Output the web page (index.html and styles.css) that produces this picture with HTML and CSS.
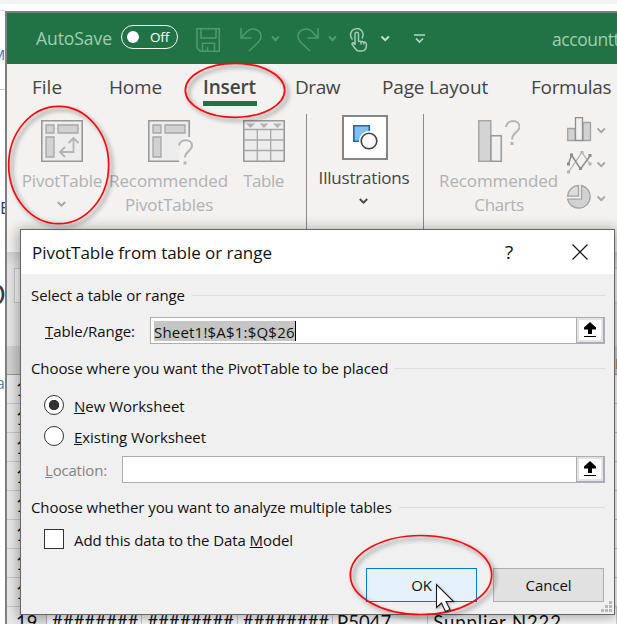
FILE: index.html
```
<!DOCTYPE html>
<html lang="en">
<head>
<meta charset="utf-8">
<title>PivotTable from table or range</title>
<link rel="stylesheet" href="styles.css">
</head>
<body>
<aside class="page-edge">
  <span class="bit bit-m">M</span>
  <span class="bit-line"></span>
  <span class="bit bit-e">E</span>
  <span class="bit bit-o">O</span>
  <span class="bit bit-a">a</span>
</aside>
<main class="excel">
  <header class="titlebar">
    <span class="autosave">AutoSave</span>
    <span class="toggle"><i class="knob"></i><span>Off</span></span>
    <svg class="qat" width="240" height="51" viewBox="189 13 240 51" fill="none" stroke-width="1.5">
      <g stroke="#4f9a6e">
        <path d="M197 28.7h22.3v22.6h-19l-3.3-3.3zM201 28.7v9.3h15v-9.3M202.5 51.3v-8h12v8M207.5 51v-4"/>
        <path d="M241 28v10h10.500M241.500 37.500l5.500-6c5-5 14-2 14 5 0 3-2 5-4 7l-8 7.500"/>
        <path d="M318 28v10h-10.500M317.500 37.500l-5.500-6c-5-5-14-2-14 5 0 3 2 5 4 7l8 7.500"/>
        <path d="M272 36.500l3.500 3.500 3.500-3.500M329 36.500l3.500 3.500 3.500-3.500" stroke-width="2"/>
      </g>
      <g stroke="#a0cdb1">
        <path d="M352.500 39.500a6.300 6.300 0 1 1 9.500-1"/>
        <path d="M355 45V34c0-2.500 3.500-2.500 3.500 0v7l6 1c1.500.300 2 1 2 2.500 0 4-2 6.500-5 6.500h-3c-2 0-3-2-4.500-4l-2-3c0-2 2-1.500 3 .500M361 41.500v3M363.800 42v2.500"/>
        <path d="M381.500 36.500l3.700 3.700 3.700-3.700" stroke="#c5e0cf" stroke-width="2"/>
        <path d="M414 35h11M416 38.500l3.500 3.500 3.500-3.500" stroke="#b5d8c2" stroke-width="1.700"/>
      </g>
    </svg>
    <span class="doc">accountt</span>
  </header>
  <nav class="tabs">
    <span class="tab t-file">File</span><span class="tab t-home">Home</span><span class="tab t-insert">Insert</span><span class="tab t-draw">Draw</span><span class="tab t-page">Page Layout</span><span class="tab t-form">Formulas</span>
  </nav>
  <section class="ribbon">
    <div class="cmd">
      <svg width="42" height="42" viewBox="0 0 42 42" fill="#d2d2d2" stroke="#a6a6a6" stroke-width="1.300">
        <path d="M.8.800h40.400v40.400H.8z" fill="#ededed" stroke="#999" stroke-width="1.600"/>
        <path d="M5 5h8v8H5zM17 5h20v8H17zM5 17h8v20H5z"/>
        <path d="M32.500 18v14H19M27.500 23l5-5 5 5M24 27l-5 5 5 5" fill="none" stroke="#b4b4b4" stroke-width="1.800"/>
      </svg>
      <span class="lbl l-pivot">PivotTable</span>
      <svg class="chev" width="9" height="6" viewBox="0 0 9 6"><path d="M.8 1l3.700 3.700L8.200 1"/></svg>
    </div>
    <div class="cmd">
      <svg class="wide" width="46" height="45" viewBox="0 0 46 45" fill="#d2d2d2" stroke="#a6a6a6" stroke-width="1.300">
        <path d="M41.200 17V.8H.8v40.400H31V31l4-12z" fill="#ededed" stroke="none"/>
        <path d="M41.200 17V.8H.8v40.400H31" fill="none" stroke="#999" stroke-width="1.600"/>
        <path d="M5 5h8v8H5zM17 5h20v8H17zM5 17h8v20H5z"/>
        <path d="M31 25.500c1-7 13-7 13 0 0 5-7 6-7 12" fill="none" stroke="#b4b4b4" stroke-width="2"/>
        <path d="M35.500 41.500h3v3h-3z" fill="#b4b4b4" stroke="none"/>
      </svg>
      <span class="lbl l-rec">Recommended</span>
      <span class="lbl l-pts">PivotTables</span>
    </div>
    <div class="cmd">
      <svg width="42" height="42" viewBox="0 0 42 42" fill="none" stroke="#a8a8a8" stroke-width="1.300">
        <path d="M.8.800h40.400v40.400H.8z" fill="#ededed" stroke="#999" stroke-width="1.600"/>
        <path d="M1 9.500h40M1 20h40M1 30.500h40M14.300 10v31M27.700 10v31"/>
        <path d="M3 3.500h9l-4.500 4.500zM16.500 3.500h9L21 8zM30 3.500h9L34.500 8z" fill="#b4b4b4" stroke="none"/>
      </svg>
      <span class="lbl l-table">Table</span>
    </div>
    <div class="cmd illus">
      <svg width="46" height="45" viewBox="0 0 46 45">
        <path d="M1 1h44v43H1z" fill="#fff" stroke="#858585" stroke-width="2"/>
        <path d="M11.800 10.800h15.500v15.500H11.800z" fill="#83beec" stroke="#0f6cbd" stroke-width="1.600"/>
        <circle cx="27" cy="26" r="10" fill="#fff"/>
        <circle cx="27" cy="26" r="7.800" fill="#fafafa" stroke="#404040" stroke-width="1.600"/>
      </svg>
      <span class="lbl l-ill">Illustrations</span>
      <svg class="chev" width="9" height="6" viewBox="0 0 9 6"><path d="M.8 1l3.700 3.700L8.200 1"/></svg>
    </div>
    <div class="cmd charts">
      <svg width="42" height="42" viewBox="478 120 42 42" fill="none" stroke="#a6a6a6" stroke-width="1.500">
        <path d="M478.800 120.800h12v40.500h-12z" fill="#d4d4d4"/>
        <path d="M491 135.800h10.300v25.500H491z" fill="#f0f0f0" stroke="#999"/>
        <path d="M506 127c1-8 13.500-8 13.500 0 0 5-7.500 6-7.500 12.500" stroke="#b4b4b4" stroke-width="2"/>
        <path d="M510.500 142h3v3h-3z" fill="#b4b4b4" stroke="none"/>
      </svg>
      <span class="lbl l-rec">Recommended</span>
      <span class="lbl l-ch">Charts</span>
    </div>
    <svg class="minis" width="42" height="98" viewBox="566 114 42 98" fill="none" stroke="#a2a2a2" stroke-width="1.300">
      <path d="M567.700 128.500h7.500v12h-7.500zM583 122.500h7.500v18H583z" fill="#d2d2d2"/>
      <path d="M575.500 117.700h7v22.800h-7z" fill="#f0f0f0" stroke="#8f8f8f"/>
      <path d="M568.500 172l13.500-19.500 8 11.500" stroke="#b4b4b4"/>
      <path d="M568.500 164l3-9 9 14 9.500-13" stroke="#8c8c8c" stroke-width="1.500"/>
      <path d="M567 162.500h3v3h-3zM570 153.500h3v3h-3zM579 167h3v3h-3zM588.500 154h3v3h-3z" fill="#8c8c8c" stroke="none"/>
      <path d="M567 170.500h3v3h-3zM580.500 151h3v3h-3zM588.500 162.500h3v3h-3z" fill="#b4b4b4" stroke="none"/>
      <path d="M581.500 185.500a11.500 11.500 0 1 1-14 13.700h14z" fill="#d2d2d2"/>
      <path d="M578.500 185.500v10.700h-11a11.500 11.500 0 0 1 11-10.700z" fill="#ddd"/>
      <path d="M597.500 128.500l3.700 3.700 3.700-3.700M597.500 162.500l3.700 3.700 3.700-3.700M597.500 196.500l3.700 3.700 3.700-3.700" stroke="#a6a6a6" stroke-width="1.800"/>
    </svg>
  </section>
  <section class="formula"><div class="namebox"></div></section>
  <section class="sheet">
    <div class="row head"><i class="edge-glyph"></i></div>
    <div class="row"><b>10</b></div>
    <div class="row"><b>11</b></div>
    <div class="row"><b>12</b></div>
    <div class="row"><b>13</b></div>
    <div class="row"><b>14</b></div>
    <div class="row"><b>15</b></div>
    <div class="row"><b>16</b></div>
    <div class="row"><b>18</b></div>
    <div class="row last"><b>19</b><span>########</span><span>########</span><span>########</span><span class="code">P5047</span><span class="sup">Supplier N222</span></div>
  </section>
</main>

<section class="dialog">
  <header class="d-title"><span class="d-name">PivotTable from table or range</span><span class="help">?</span>
    <svg width="16" height="16" viewBox="0 0 16 16"><path d="M.5.500l15 15M15.500.500l-15 15" stroke="#111" stroke-width="1.200"/></svg>
  </header>
  <div class="d-body">
    <div class="legend"><span>Select a table or range</span></div>
    <div class="field range"><label><u>T</u>able/Range:</label>
      <div class="input"><span class="sel">Sheet1!$A$1:$Q$26</span></div>
      <span class="pick"><svg width="12" height="15" viewBox="0 0 12 15"><path d="M6 0l6 5.500v2H8V12H4V7.500H0v-2zM0 14h12v1H0z"/></svg></span></div>
    <div class="legend second"><span>Choose where you want the PivotTable to be placed</span></div>
    <div class="opt new"><i class="radio on"></i><span><u>N</u>ew Worksheet</span></div>
    <div class="opt existing"><i class="radio"></i><span><u>E</u>xisting Worksheet</span></div>
    <div class="field location"><label><u>L</u>ocation:</label>
      <div class="input"></div>
      <span class="pick"><svg width="12" height="15" viewBox="0 0 12 15"><path d="M6 0l6 5.500v2H8V12H4V7.500H0v-2zM0 14h12v1H0z"/></svg></span></div>
    <div class="legend second"><span>Choose whether you want to analyze multiple tables</span></div>
    <div class="opt model"><i class="check"></i><span>Add this data to the Data <u>M</u>odel</span></div>
    <div class="buttons"><span class="btn ok">OK</span><span class="btn">Cancel</span></div>
  </div>
  <svg class="grip" width="11" height="11" viewBox="0 0 11 11" fill="#b9b9b9"><path d="M8 0h3v3H8zM4 4h3v3H4zM8 4h3v3H8zM0 8h3v3H0zM4 8h3v3H4zM8 8h3v3H8z"/></svg>
</section>

<svg class="marks" width="617" height="624" viewBox="0 0 617 624" fill="none">
  <g stroke="#f40b0b" stroke-width="1.700">
    <ellipse cx="58.700" cy="165" rx="50" ry="58.700"/>
    <ellipse cx="235" cy="90.300" rx="49.700" ry="27"/>
    <ellipse cx="421" cy="575" rx="70.700" ry="39.500"/>
  </g>
  <path class="pointer" d="M436.500 584.500v23l5-4.500 4 8.500 4.500-2-4-8h7.500z" fill="#fff" stroke="#1c1c2c" stroke-width="1.100"/>
</svg>
</body>
</html>
```
FILE: styles.css
```
* { box-sizing: border-box; }
body {
  margin: 0; width: 617px; height: 624px; overflow: hidden; position: relative;
  display: flex; padding-top: 11px; background: #fff;
  box-shadow: inset 0 4px #f1f3f5;
  font-family: "Open Sans", "Noto Sans", sans-serif; color: #111;
}
i { font-style: normal; }
svg { display: block; flex: none; }

/* Sliver of the page behind the window */
.page-edge { width: 5px; flex: none; display: flex; flex-direction: column; overflow: hidden; border-top: 1px solid #ddd; margin-top: -1px; }
.bit { display: flex; justify-content: flex-end; height: 20px; line-height: 20px; flex: none; }
.bit-m { margin-top: 34px; color: #2a70c0; font-size: 14px; }
.bit-line { height: 1px; flex: none; background: #ccc; margin-top: 24px; }
.bit-e { margin-top: 108px; color: #2a4068; font-size: 17px; justify-content: flex-start; }
.bit-o { margin-top: 66px; color: #333c4a; font-size: 30px; margin-right: -1px; }
.bit-a { margin-top: 69px; color: #6b7c98; font-size: 17px; }

.excel { flex: none; width: 612px; height: 613px; overflow: hidden; border: solid #7f7f7f; border-width: 2px 0 0 2px; background: #e6e6e6; }

.titlebar { height: 51px; background: #217346; display: flex; align-items: center; padding-left: 29px; color: #9fceb2; font-size: 17.5px; }
.autosave { width: 85px; flex: none; letter-spacing: -.06px; margin-top: -2px; }
.toggle { flex: none; width: 57px; height: 24px; margin-top: -3px; border: 1.500px solid #f3f8f5; border-radius: 12px; display: flex; align-items: center; padding-left: 5px; gap: 11px; color: #fff; font-size: 13.5px; letter-spacing: -.2px; }
.knob { width: 12px; height: 12px; border-radius: 50%; background: #fff; }
.qat { margin-left: 11px; }
.doc { flex: none; margin-left: 123px; padding-top: 1px; letter-spacing: -.45px; }

.tabs { height: 47px; display: flex; align-items: center; background: #f3f2f1; color: #444; font-size: 19px; padding-left: 25px; line-height: 49px; white-space: nowrap; }
.t-file { width: 77px; }
.t-home { width: 94px; letter-spacing: -.17px; }
.t-insert { width: 54px; margin-right: 38px; height: 49px; font-weight: 600; letter-spacing: -.15px; background: linear-gradient(#217346, #217346) 0 38px / 54px 5px no-repeat; }
.t-draw { width: 87px; letter-spacing: -.45px; }
.t-page { width: 149px; letter-spacing: -.16px; }
.t-form { letter-spacing: -.3px; }

.ribbon { height: 141px; background: #f3f2f1; display: grid; grid-template-columns: 110px 104px 85px 117px 144px 50px; color: #b1b1b1; font-size: 17px; }
.cmd { display: flex; flex-direction: column; align-items: center; padding-top: 9px; white-space: nowrap; }
.cmd .wide { margin: 0 0 -3px 4px; }
.lbl { line-height: 24px; height: 24px; }
.cmd > svg:first-child + .lbl { margin-top: 7px; }
.l-pivot { letter-spacing: -.2px; }
.l-rec { letter-spacing: -.12px; margin-left: -1px; }
.l-pts { letter-spacing: -.2px; }
.l-table { letter-spacing: -.5px; }
.l-ill { letter-spacing: -.2px; margin-left: -1px; }
.l-ch { letter-spacing: -.4px; }
.chev { margin-top: 8px; margin-right: 2px; fill: none; stroke: #a6a6a6; stroke-width: 1.8; }
.illus { padding-top: 4px; color: #444; background: linear-gradient(#8a8a8a, #8a8a8a) 0 3px / 1px 138px no-repeat; }
.illus > svg:first-child + .lbl { margin-top: 6px; }
.illus .chev { stroke: #444; }
.charts { padding-left: 8px; background: linear-gradient(#8a8a8a, #8a8a8a) 0 3px / 1px 138px no-repeat; }
.minis { margin-top: 3px; margin-left: -1px; }

.formula { height: 94px; padding: 16px 0 0 7px; background: linear-gradient(#d2d2d2, #e6e6e6 14px); }
.namebox { height: 35px; border: 1px solid #c6c6c6; border-right: 0; background: #f5f5f5; }
.sheet { font-family: Lato, sans-serif; font-size: 18.5px; }
.row { height: 29px; line-height: 28px; display: flex; border-bottom: 1px solid #c8c8c8; background: linear-gradient(90deg, #e9e9e9 39px, #fff 39px); }
.row.head { background: #d2d2d2; border-color: #999; }
.edge-glyph { width: 2px; height: 10px; margin: 13px 0 0 609px; background: linear-gradient(90deg, #c98a55 1px, #111 1px); }
.row b { width: 40px; padding-left: 9px; font-weight: 400; border-right: 1px solid #b5b5b5; }
.row.last { line-height: 31px; }
.row span { width: 96px; padding-left: 5px; border-right: 1px solid #d0d0d0; white-space: nowrap; letter-spacing: .1px; }
.row .code { padding-left: 4px; }
.row .sup { width: 190px; letter-spacing: .9px; }

/* Dialog window over the workbook */
.dialog { position: absolute; left: 20px; top: 229px; width: 595px; height: 386px; border: 1px solid #666; background: #f0f0f0; box-shadow: 0 2px 12px 2px rgba(0,0,0,.32); font-size: 15px; }
.d-title { height: 44px; background: #fff; display: flex; align-items: center; padding-left: 11px; font-size: 17px; }
.d-name { width: 473px; letter-spacing: -.04px; }
.help { width: 67px; font-size: 19px; }
.d-body { padding: 9px 9px 0 10px; }
.legend { height: 24px; display: flex; align-items: center; gap: 7px; letter-spacing: -.08px; white-space: nowrap; }
.legend::after { content: ""; flex: 1; height: 1px; background: #dcdcdc; }
.legend.second { margin-top: 12px; }
.field { display: flex; height: 27px; margin-top: 10px; align-items: center; padding-left: 14px; }
.field label { letter-spacing: -.07px; }
.range label { width: 105px; }
.location label { width: 77px; color: #838383; letter-spacing: -.19px; }
.input { flex: 1; height: 27px; background: #fff; border: 1px solid #abadb3; padding: 3px 0 0 3px; }
.sel { display: inline-block; height: 20px; line-height: 22px; background: #c5c5c5; border-right: 1px solid #000; letter-spacing: .2px; }
.pick { width: 29px; height: 27px; margin-left: -1px; display: flex; align-items: center; justify-content: center; border: 1px solid #abadb3; border-right-width: 2px; border-bottom-width: 2px; background: #fff; box-shadow: inset 0 0 0 2px #e3e3e3; }
.pick svg { margin: -2px 1px 0 0; }
.opt { height: 20px; display: flex; align-items: center; padding-left: 13px; gap: 10px; white-space: nowrap; }
.opt span { padding-top: 2px; }
.new { margin-top: 15px; }
.existing { margin-top: 11px; letter-spacing: -.05px; }
.model { margin-top: 10px; letter-spacing: -.1px; }
.radio, .check { width: 20px; height: 20px; background: #fff; border: 1.300px solid #333; }
.radio { border-radius: 50%; }
.radio.on { background: radial-gradient(circle, #333 4.800px, #fff 5.500px); }
.buttons { display: flex; justify-content: flex-end; gap: 16px; margin-top: 19px; padding-right: 1px; }
.btn { width: 111px; height: 34px; line-height: 32px; text-align: center; border: 1px solid #adadad; background: #e1e1e1; letter-spacing: -.1px; }
.btn.ok { border-color: #0078d7; background: #e5f1fb; }
.grip { position: absolute; right: 2px; bottom: 2px; }

.marks { position: absolute; left: 0; top: 0; pointer-events: none; }
.marks g { filter: drop-shadow(3px 3px 2px rgba(0,0,0,.5)); }
.pointer { filter: drop-shadow(1px 1px 1px rgba(0,0,0,.3)); }
```
